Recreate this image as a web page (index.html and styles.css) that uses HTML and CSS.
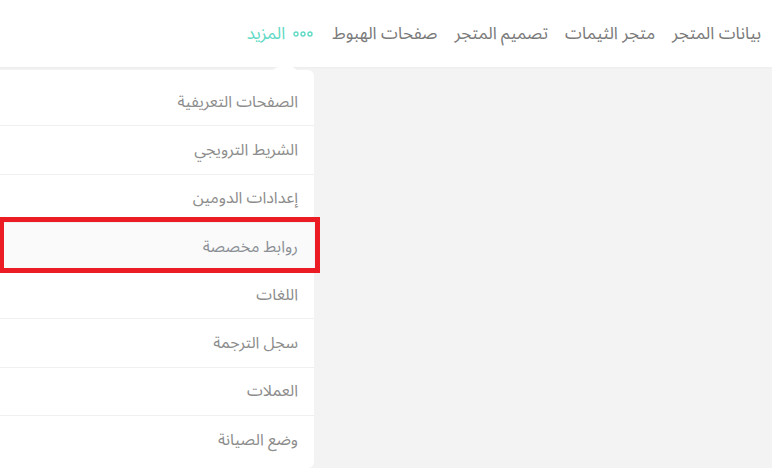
FILE: index.html
```html
<!DOCTYPE html>
<html lang="ar" dir="rtl">
<head>
    <meta charset="UTF-8">
    <meta name="viewport" content="width=device-width, initial-scale=1.0">
    <title>إعدادات المتجر</title>
    <link rel="stylesheet" href="styles.css">
</head>
<body>

    <header class="topbar">
        <nav class="nav">
            <a class="nav-link">بيانات المتجر</a>
            <a class="nav-link">متجر الثيمات</a>
            <a class="nav-link">تصميم المتجر</a>
            <a class="nav-link">صفحات الهبوط</a>
            <a class="nav-link more">
                <svg class="dots" width="20" height="6" viewBox="0 0 20 6">
                    <circle cx="3" cy="3" r="2" fill="none" stroke="currentColor" stroke-width="1.4"/>
                    <circle cx="10" cy="3" r="2" fill="none" stroke="currentColor" stroke-width="1.4"/>
                    <circle cx="17" cy="3" r="2" fill="none" stroke="currentColor" stroke-width="1.4"/>
                </svg>
                المزيد
            </a>
        </nav>
    </header>

    <main class="page">
        <div class="dropdown">
            <span class="caret"></span>
            <ul class="menu">
                <li class="menu-item">الصفحات التعريفية</li>
                <li class="menu-item">الشريط الترويجي</li>
                <li class="menu-item">إعدادات الدومين</li>
                <li class="menu-item active">روابط مخصصة</li>
                <li class="menu-item">اللغات</li>
                <li class="menu-item">سجل الترجمة</li>
                <li class="menu-item">العملات</li>
                <li class="menu-item">وضع الصيانة</li>
            </ul>
        </div>
    </main>

</body>
</html>
```

FILE: styles.css
```css
body {
    margin: 0;
    background-color: #f3f3f3;
    font-family: "Noto Sans Arabic", "DejaVu Sans", "Noto Sans", sans-serif;
    color: #8a8a8a;
    overflow: hidden;
}

.topbar {
    height: 67px;
    background-color: #fff;
    display: flex;
    align-items: center;
    box-shadow: 0 1px 2px rgba(0, 0, 0, 0.03);
}

.nav {
    display: flex;
    align-items: center;
    gap: 17px;
    padding-right: 11px;
}

.nav-link {
    font-size: 17px;
    color: #7a7a7a;
    display: flex;
    align-items: center;
    gap: 8px;
    white-space: nowrap;
}

.nav-link.more {
    color: #5fd9c5;
    margin-right: 2px;
}

.page {
    display: flex;
    justify-content: flex-end;
    padding-top: 3px;
}

.dropdown {
    position: relative;
    width: 314px;
    background-color: #fff;
    border-radius: 0 6px 6px 0;
    padding: 8px 0 4px;
}

.caret {
    position: absolute;
    top: -8px;
    left: 273px;
    width: 0;
    height: 0;
    border-left: 12px solid transparent;
    border-right: 12px solid transparent;
    border-bottom: 8px solid #fff;
}

.menu {
    list-style: none;
    margin: 0;
    padding: 0;
}

.menu-item {
    height: 48.3px;
    box-sizing: border-box;
    display: flex;
    align-items: center;
    padding-right: 16px;
    font-size: 16px;
    color: #8c8c8c;
    border-bottom: 1px solid #f0f0f0;
}

.menu-item:last-child {
    border-bottom: none;
}

.menu-item.active {
    position: relative;
    background-color: #fafafa;
    color: #8b8f96;
}

.menu-item.active::after {
    content: "";
    position: absolute;
    top: -6px;
    bottom: -3px;
    left: -1px;
    right: -6px;
    border: 5px solid #ec1c24;
}
```
